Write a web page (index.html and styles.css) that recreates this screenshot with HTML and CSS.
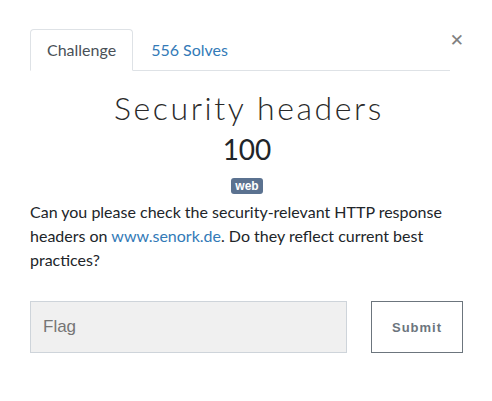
FILE: index.html
```html
<!DOCTYPE html>
<html>
<head>
<meta charset="utf-8">
<link rel="stylesheet" href="styles.css">
</head>
<body>
<div class="modal">
  <div class="top">
    <ul class="tabs">
      <li class="tab active">Challenge</li>
      <li class="tab link">556 Solves</li>
    </ul>
    <span class="close">&#x2715;</span>
  </div>
  <h2 class="title">Security headers</h2>
  <h3 class="value">100</h3>
  <div class="tags"><span class="badge">web</span></div>
  <p class="desc">Can you please check the security-relevant HTTP response headers on <a href="#">www.senork.de</a>. Do they reflect current best practices?</p>
  <div class="form">
    <div class="flag">Flag</div>
    <button class="submit">Submit</button>
  </div>
</div>
</body>
</html>
```
FILE: styles.css
```css
html, body { margin: 0; padding: 0; background: #fff; }
body { font-family: Lato, "Open Sans", sans-serif; color: #212529; }
.modal { padding: 29px 0 0 30px; width: 434px; }
.top { display: flex; align-items: flex-start; width: 420px; position: relative; }
.tabs { list-style: none; margin: 0; padding: 0; display: flex; flex: 1; border-bottom: 1px solid #dee2e6; }
.tab { padding: 8px 16px; font-size: 16px; line-height: 24px; border: 1px solid transparent; border-top-left-radius: 4px; border-top-right-radius: 4px; margin-bottom: -1px; }
.tab.active { color: #495057; border-color: #dee2e6 #dee2e6 #fff; }
.tab.link { color: #337ab7; padding-left: 17px; }
.close { position: absolute; right: -14px; top: 1px; font-size: 17px; font-weight: bold; color: #808080; font-family: "DejaVu Sans", sans-serif; }
.title { margin: 18px 0 0; width: 434px; text-align: center; font-family: Lato, sans-serif; font-weight: 300; font-size: 32px; line-height: 38px; letter-spacing: 2.6px; color: #2a2a2a; padding-left: 4px; box-sizing: border-box; }
.value { margin: 5px 0 0; width: 434px; text-align: center; font-weight: 400; font-size: 28px; line-height: 34px; color: #212529; }
.tags { width: 434px; text-align: center; margin-top: 12px; height: 16px; }
.badge { display: inline-block; background: #5b7290; color: #fff; font-family: "Liberation Sans", Arial, sans-serif; font-weight: bold; font-size: 12px; line-height: 16px; height: 16px; padding: 0 4px; border-radius: 3px; vertical-align: top; }
.desc { margin: 6px 0 0; width: 420px; font-size: 16px; line-height: 24px; }
.desc a { color: #337ab7; text-decoration: none; }
.form { display: flex; margin-top: 29px; gap: 24px; }
.flag { width: 317px; height: 52px; box-sizing: border-box; background: #f0f0f0; border: 1px solid #ced4da; font-family: "Liberation Sans", Arial, sans-serif; font-size: 17px; color: #757575; padding-left: 12px; display: flex; align-items: center; }
.submit { width: 92px; height: 52px; box-sizing: border-box; background: #fff; border: 1px solid #6c757d; border-width: 1.5px; font-family: "Liberation Sans", Arial, sans-serif; font-weight: bold; font-size: 13px; letter-spacing: 1px; color: #6c757d; padding: 0; }
```
